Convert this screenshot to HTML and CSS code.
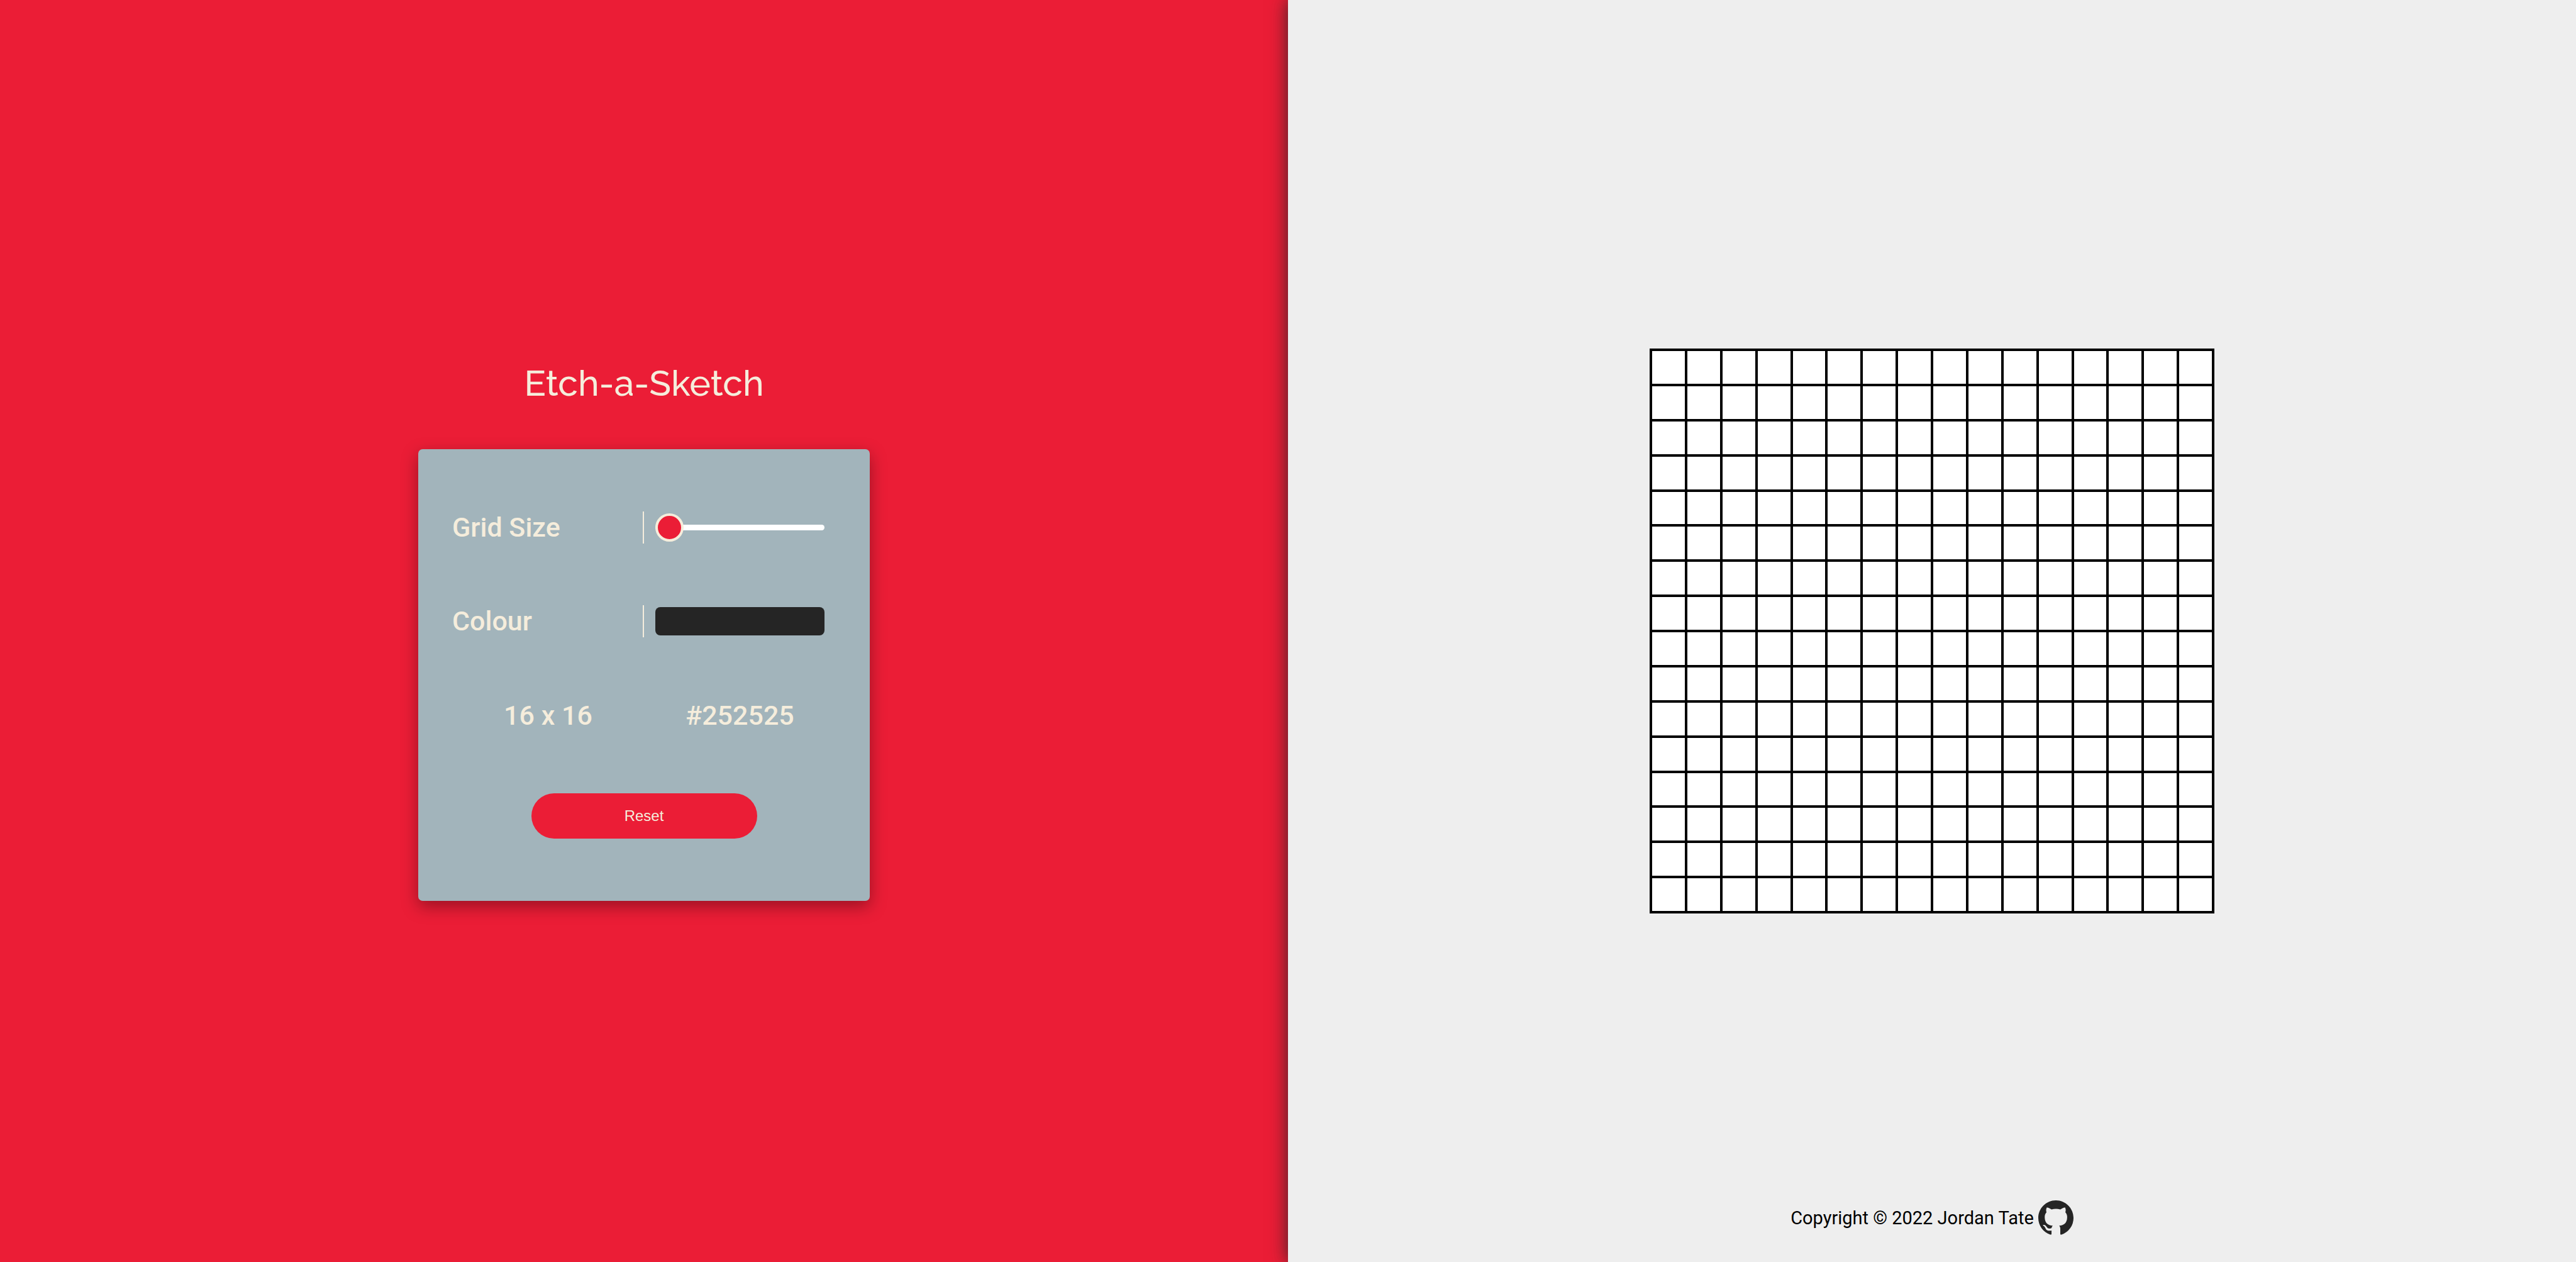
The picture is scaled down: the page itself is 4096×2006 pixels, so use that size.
FILE: index.html
```html
<!DOCTYPE html>
<html lang="en">
<head>
  <meta charset="utf-8">
  <meta name="viewport" content="width=device-width, initial-scale=1">
  <title>Etch-a-Sketch</title>
  <link rel="stylesheet" href="styles.css">
</head>
<body>
  <div class="page">
    <section class="controls">
      <h1 class="title">Etch-a-Sketch</h1>
      <div class="card">
        <div class="row">
          <label class="label" for="grid-size">Grid Size</label>
          <div class="field"><input class="slider" id="grid-size" type="range" min="16" max="64" value="16"></div>
        </div>
        <div class="row">
          <label class="label" for="colour">Colour</label>
          <div class="field"><input class="colour" id="colour" type="color" value="#252525"></div>
        </div>
        <div class="row">
          <output class="value" for="grid-size">16 x 16</output>
          <output class="value" for="colour">#252525</output>
        </div>
        <button class="reset" type="button">Reset</button>
      </div>
    </section>
    <main class="board">
      <div class="canvas" id="canvas"></div>
      <footer class="footer">
        <span>Copyright © 2022 Jordan Tate</span>
        <a class="github" href="#" aria-label="GitHub">
          <svg class="github-icon" viewBox="0 0 16 16" aria-hidden="true"><path d="M8 0C3.58 0 0 3.58 0 8c0 3.54 2.29 6.53 5.47 7.59.4.07.55-.17.55-.38 0-.19-.01-.82-.01-1.49-2.01.37-2.53-.49-2.69-.94-.09-.23-.48-.94-.82-1.13-.28-.15-.68-.52-.01-.53.63-.01 1.08.58 1.23.82.72 1.21 1.87.87 2.33.66.07-.52.28-.87.51-1.07-1.78-.2-3.64-.89-3.64-3.95 0-.87.31-1.59.82-2.15-.08-.2-.36-1.02.08-2.12 0 0 .67-.21 2.2.82.64-.18 1.32-.27 2-.27s1.36.09 2 .27c1.53-1.04 2.2-.82 2.2-.82.44 1.1.16 1.92.08 2.12.51.56.82 1.27.82 2.15 0 3.07-1.87 3.75-3.65 3.95.29.25.54.73.54 1.48 0 1.07-.01 1.93-.01 2.2 0 .21.15.46.55.38A8.01 8.01 0 0 0 16 8c0-4.42-3.58-8-8-8z"/></svg>
        </a>
      </footer>
    </main>
  </div>
  <script src="script.js"></script>
</body>
</html>
```
FILE: styles.css
```css
* {
  box-sizing: border-box;
}

body {
  margin: 0;
  font-family: Roboto, "Liberation Sans", sans-serif;
}

.page {
  display: grid;
  grid-template-columns: 1fr 1fr;
  min-height: 100vh;
}

.controls {
  display: flex;
  flex-direction: column;
  align-items: center;
  justify-content: center;
  gap: 70px;
  background: #eb1d36;
  color: #f5eddc;
}

.title {
  margin: 0;
  font-family: Raleway, Lato, sans-serif;
  font-size: 57px;
  font-weight: 500;
  line-height: 70px;
}

.card {
  display: flex;
  flex-direction: column;
  align-items: center;
  justify-content: space-evenly;
  width: 718px;
  aspect-ratio: 1;
  padding: 0 54px;
  border-radius: 7px;
  background: #a2b4bb;
  box-shadow: 0 9px 27px rgba(0, 0, 0, 0.35);
}

.row {
  display: grid;
  grid-template-columns: 1fr 1fr;
  width: 100%;
  font-size: 43px;
  font-weight: 500;
  line-height: 51px;
}

.label {
  border-right: 2px solid #f5eddc;
}

.field {
  display: flex;
  align-items: center;
  padding: 0 18px;
}

.value {
  text-align: center;
}

.slider {
  appearance: none;
  width: 100%;
  height: 9px;
  margin: 0;
  border-radius: 5px;
  background: #fff;
}

.slider::-webkit-slider-thumb {
  appearance: none;
  width: 45px;
  height: 45px;
  border: 4px solid #f5eddc;
  border-radius: 50%;
  background: #eb1d36;
}

.colour {
  appearance: none;
  width: 100%;
  height: 45px;
  padding: 0;
  border: 0;
  border-radius: 8px;
  background: #252525;
  overflow: hidden;
}

.colour::-webkit-color-swatch-wrapper {
  padding: 0;
}

.colour::-webkit-color-swatch {
  border: 0;
}

.reset {
  width: 359px;
  height: 72px;
  padding: 0;
  border: 0;
  border-radius: 36px;
  background: #eb1d36;
  color: #f5eddc;
  font-family: "Liberation Sans", Arial, sans-serif;
  font-size: 24px;
}

.board {
  display: grid;
  grid-template-rows: 1fr auto 1fr;
  justify-items: center;
  background: #eee;
  box-shadow: 0 0 27px rgba(37, 37, 37, 0.9);
}

.canvas {
  display: grid;
  grid-row: 2;
  grid-template-columns: repeat(16, 1fr);
  gap: 4px;
  width: 898px;
  aspect-ratio: 1;
  border: 4px solid #000;
  background: #000;
}

.cell {
  background: #fff;
}

.footer {
  display: flex;
  grid-row: 3;
  align-items: center;
  align-self: end;
  gap: 7px;
  padding-bottom: 42px;
  font-size: 29px;
  line-height: 34px;
}

.github {
  display: flex;
  color: #252525;
}

.github-icon {
  width: 56px;
  height: 56px;
  fill: currentColor;
}
```
FILE: script.js
```js
const canvas = document.getElementById('canvas');
const size = Number(document.getElementById('grid-size').value);

for (let i = 0; i < size * size; i += 1) {
  const cell = document.createElement('div');
  cell.className = 'cell';
  canvas.append(cell);
}
```
